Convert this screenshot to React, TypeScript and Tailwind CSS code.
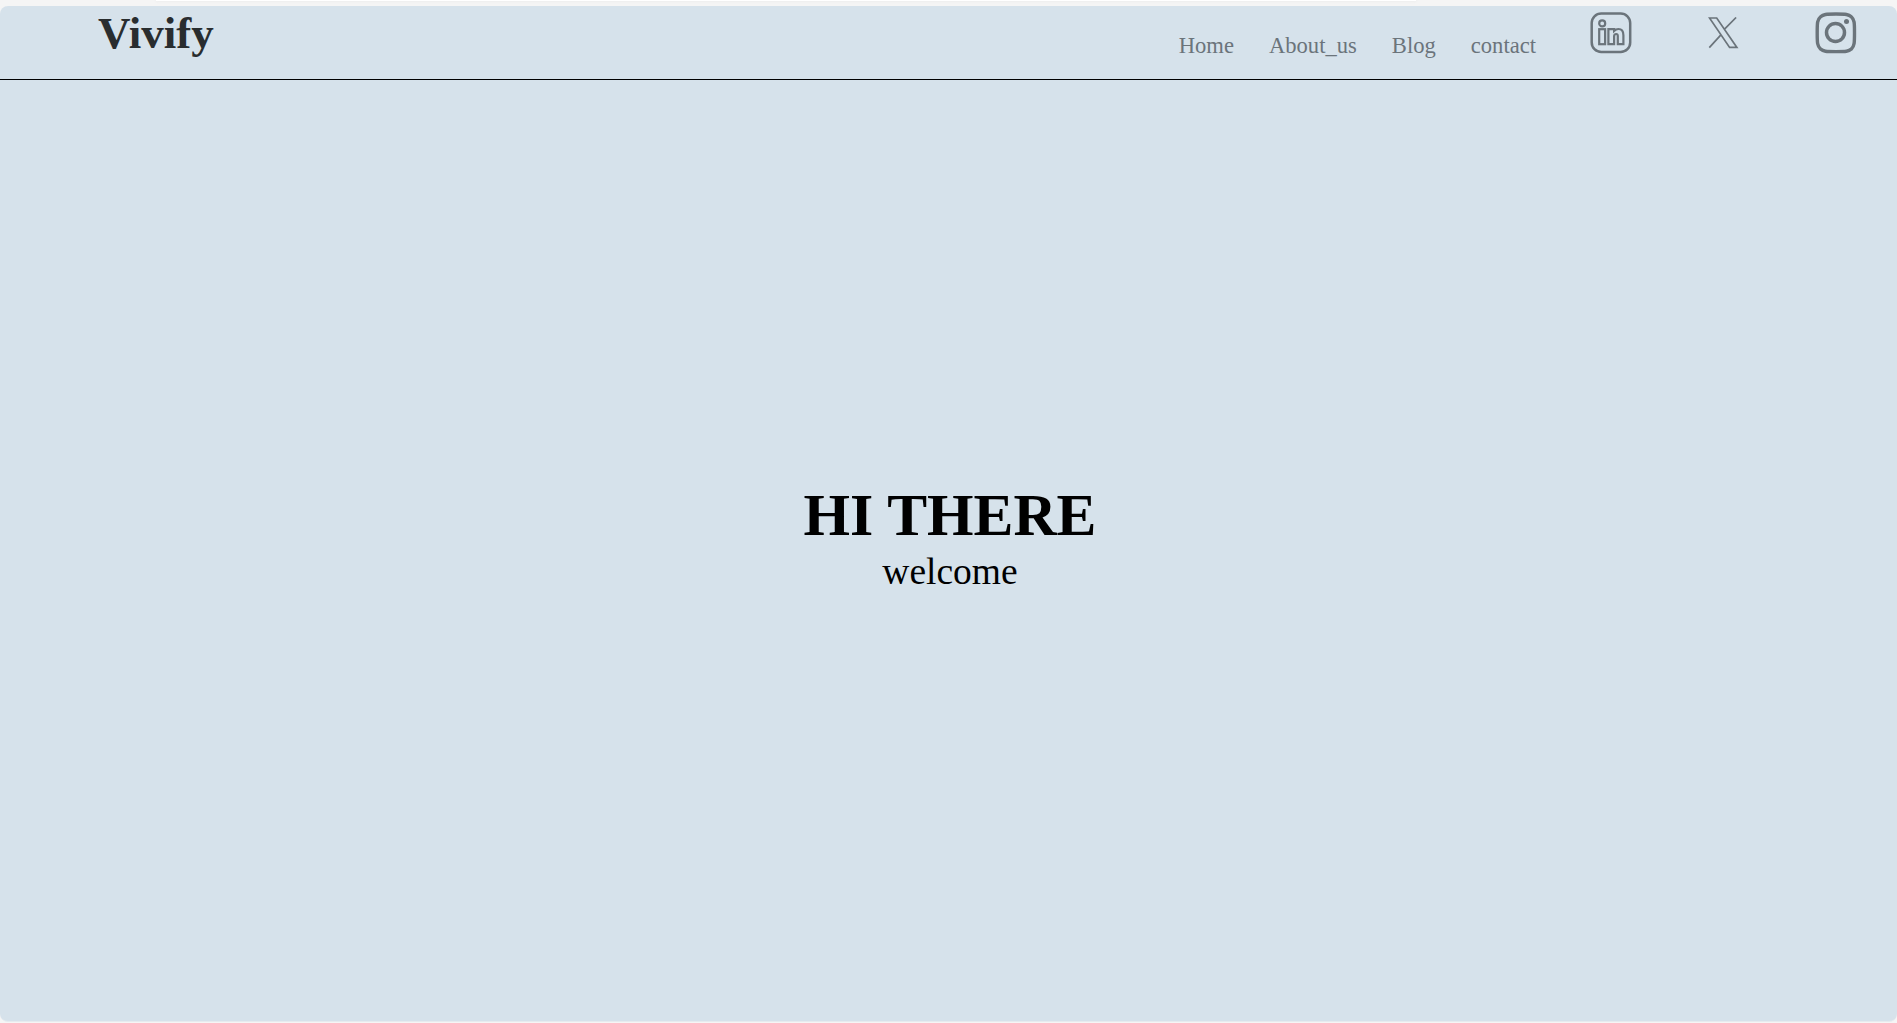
const links = ['Home', 'About_us', 'Blog', 'contact'];

function LinkedInIcon() {
  return (
    <svg viewBox="0 0 42 42" className="h-[42px] w-[42px]" fill="none" stroke="currentColor" strokeWidth="2.2">
      <rect x="1.7" y="1.5" width="38.5" height="38.5" rx="9.5" strokeWidth="2.5" />
      <circle cx="12.2" cy="11.4" r="3" />
      <rect x="9.2" y="17.2" width="5.9" height="15" />
      <path d="M18.4 17.2h5.7v1.7c1.4-1.4 2.6-1.9 4.3-1.9 3.5 0 5 2.6 5 6.300v8.900h-5.600V24c0-1.300-.6-2-1.600-2-1.300 0-2.100.9-2.100 2.400v7.800h-5.700z" />
    </svg>
  );
}

function XIcon() {
  return (
    <svg viewBox="0 0 32 32" className="h-8 w-8" fill="none" stroke="currentColor" strokeWidth="1.7">
      <path d="M1.5 1h7.200l20.200 29.400h-7.300zM12.900 17.900 1.300 30.600M16.300 12.300 28.100.5" />
    </svg>
  );
}

function InstagramIcon() {
  return (
    <svg viewBox="0 0 42 42" className="h-[42px] w-[42px]" fill="none" stroke="currentColor">
      <path
        d="M21 2c10 0 12.700 .300 15.300 2.700C39.500 7.500 39.500 11 39.500 20.800s0 13.500-3.200 16.300C33.700 39.500 31 39.600 21 39.600S8.200 39.500 5.600 37.100C2.200 34.300 2.200 30.600 2.200 20.800S2.200 7.500 5.600 4.700C8.200 2.300 11 2 21 2z"
        strokeWidth="3.400"
      />
      <circle cx="20.500" cy="20.500" r="9" strokeWidth="3.500" />
      <circle cx="31.500" cy="9.600" r="2.500" fill="currentColor" stroke="none" />
    </svg>
  );
}

export default function App() {
  return (
    <div className="flex h-screen flex-col overflow-hidden bg-[#f5f5f5] pb-px font-['Liberation_Serif','Times_New_Roman',serif]">
      <div className="h-1.5 shrink-0 pl-[156px]">
        <div className="h-px w-[1260px] bg-white shadow-[0_0_3px_#dddddd]" />
      </div>
      <div className="flex min-h-0 flex-1 flex-col overflow-hidden rounded-lg border-b border-[#e6ebef] bg-[#d6e2eb]">
        <header className="flex h-[74px] shrink-0 items-start justify-between border-b border-black pl-[98px] pr-10">
          <h1 className="pt-px text-[45px] leading-[52px] font-bold text-[#292d2f]">Vivify</h1>
          <div className="flex items-start text-[#6b747b]">
            <nav className="mt-[27px] flex gap-[35px] text-[22.6px] leading-[26px]">
              {links.map((link) => (
                <a key={link}>{link}</a>
              ))}
            </nav>
            <div className="ml-[54px] mt-1.5 flex items-center gap-[75.5px]">
              <LinkedInIcon />
              <XIcon />
              <InstagramIcon />
            </div>
          </div>
        </header>
        <main className="flex flex-1 flex-col items-center pt-[401px] pl-[3px] text-black">
          <h2 className="text-[59.8px] leading-[68px] font-bold">HI THERE</h2>
          <p className="pt-px text-[37.5px] leading-[44px]">welcome</p>
        </main>
      </div>
    </div>
  );
}
